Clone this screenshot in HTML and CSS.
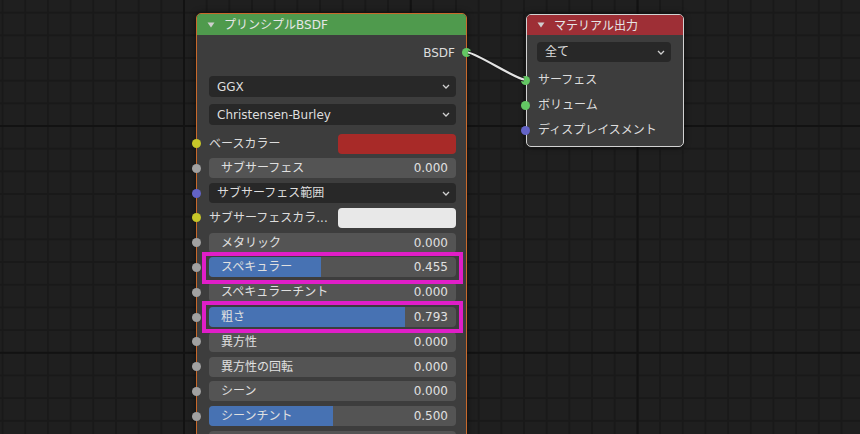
FILE: index.html
```html
<!DOCTYPE html>
<html lang="ja">
<head>
<meta charset="utf-8">
<title>Node Editor</title>
<link rel="stylesheet" href="styles.css">
</head>
<body>
<div class="canvas">
  <svg class="links" width="860" height="434" viewBox="0 0 860 434">
    <path d="M468 52.5 C478 54 514 78 524 79.5" class="link-edge"/>
    <path d="M468 52.5 C478 54 514 78 524 79.5" class="link-core"/>
  </svg>

  <div class="node principled">
    <div class="node-header hdr-green">
      <svg class="tri" width="8" height="6" viewBox="0 0 8 6"><path d="M0.5 0.5 L7.5 0.5 L4 5.5 Z"/></svg>
      <span>プリンシプルBSDF</span>
    </div>
    <div class="node-body">
      <div class="out-row">
        <span>BSDF</span>
        <span class="socket sock-green sock-right"></span>
      </div>
      <div class="select sel-top">
        <span>GGX</span>
        <svg class="chev" width="8" height="5" viewBox="0 0 8 5"><path d="M1 1 L4 4 L7 1"/></svg>
      </div>
      <div class="select sel-second">
        <span>Christensen-Burley</span>
        <svg class="chev" width="8" height="5" viewBox="0 0 8 5"><path d="M1 1 L4 4 L7 1"/></svg>
      </div>
      <div class="inputs">
        <div class="row">
          <span class="socket sock-yellow sock-left"></span>
          <span class="plain-label">ベースカラー</span>
          <span class="swatch swatch-red"></span>
        </div>
        <div class="row">
          <span class="socket sock-grey sock-left"></span>
          <div class="field"><span class="lbl">サブサーフェス</span><span class="val">0.000</span></div>
        </div>
        <div class="row">
          <span class="socket sock-purple sock-left"></span>
          <div class="select select-row">
            <span>サブサーフェス範囲</span>
            <svg class="chev" width="8" height="5" viewBox="0 0 8 5"><path d="M1 1 L4 4 L7 1"/></svg>
          </div>
        </div>
        <div class="row">
          <span class="socket sock-yellow sock-left"></span>
          <span class="plain-label">サブサーフェスカラ...</span>
          <span class="swatch swatch-white"></span>
        </div>
        <div class="row">
          <span class="socket sock-grey sock-left"></span>
          <div class="field"><span class="lbl">メタリック</span><span class="val">0.000</span></div>
        </div>
        <div class="row">
          <span class="socket sock-grey sock-left"></span>
          <div class="field"><span class="fill" style="width:45.5%"></span><span class="lbl">スペキュラー</span><span class="val">0.455</span></div>
        </div>
        <div class="row">
          <span class="socket sock-grey sock-left"></span>
          <div class="field"><span class="lbl">スペキュラーチント</span><span class="val">0.000</span></div>
        </div>
        <div class="row">
          <span class="socket sock-grey sock-left"></span>
          <div class="field"><span class="fill" style="width:79.3%"></span><span class="lbl">粗さ</span><span class="val">0.793</span></div>
        </div>
        <div class="row">
          <span class="socket sock-grey sock-left"></span>
          <div class="field"><span class="lbl">異方性</span><span class="val">0.000</span></div>
        </div>
        <div class="row">
          <span class="socket sock-grey sock-left"></span>
          <div class="field"><span class="lbl">異方性の回転</span><span class="val">0.000</span></div>
        </div>
        <div class="row">
          <span class="socket sock-grey sock-left"></span>
          <div class="field"><span class="lbl">シーン</span><span class="val">0.000</span></div>
        </div>
        <div class="row">
          <span class="socket sock-grey sock-left"></span>
          <div class="field"><span class="fill" style="width:50%"></span><span class="lbl">シーンチント</span><span class="val">0.500</span></div>
        </div>
        <div class="row">
          <span class="socket sock-grey sock-left"></span>
          <div class="field"></div>
        </div>
      </div>
    </div>
  </div>

  <div class="node output">
    <div class="node-header hdr-red">
      <svg class="tri" width="8" height="6" viewBox="0 0 8 6"><path d="M0.5 0.5 L7.5 0.5 L4 5.5 Z"/></svg>
      <span>マテリアル出力</span>
    </div>
    <div class="node-body out-body">
      <div class="select">
        <span>全て</span>
        <svg class="chev" width="8" height="5" viewBox="0 0 8 5"><path d="M1 1 L4 4 L7 1"/></svg>
      </div>
      <div class="out-inputs">
        <div class="row in-row"><span class="socket sock-green sock-left-out"></span><span class="plain-label">サーフェス</span></div>
        <div class="row in-row"><span class="socket sock-green sock-left-out"></span><span class="plain-label">ボリューム</span></div>
        <div class="row in-row"><span class="socket sock-purple sock-left-out"></span><span class="plain-label">ディスプレイスメント</span></div>
      </div>
    </div>
  </div>

  <div class="highlight hl-spec"></div>
  <div class="highlight hl-rough"></div>
</div>
</body>
</html>
```

FILE: styles.css
```css
html, body {
  margin: 0;
  padding: 0;
  background: #1f1f1f;
}

.canvas {
  position: relative;
  width: 860px;
  height: 434px;
  overflow: hidden;
  background-color: #1f1f1f;
  background-image:
    linear-gradient(to right, #121212 0 2px, transparent 2px),
    linear-gradient(to bottom, #121212 0 2px, transparent 2px),
    linear-gradient(to right, #191919 0 2px, transparent 2px),
    linear-gradient(to bottom, #191919 0 2px, transparent 2px);
  background-size: 226.8px 226.8px, 226.8px 226.8px, 22.68px 22.68px, 22.68px 22.68px;
  background-position: 183px 125px, 183px 125px, 1.6px 11.7px, 1.6px 11.7px;
  font-family: "DejaVu Sans", "Noto Sans CJK JP", sans-serif;
  font-size: 12px;
  color: #dddddd;
}

.links {
  position: absolute;
  left: 0;
  top: 0;
  z-index: 3;
  pointer-events: none;
}
.link-edge {
  fill: none;
  stroke: #1a1a1a;
  stroke-width: 4;
}
.link-core {
  fill: none;
  stroke: #e4e4e4;
  stroke-width: 2.2;
}

.node {
  position: absolute;
  background: #3d3d3d;
  border-radius: 5px;
  box-shadow: 0 0 6px rgba(0, 0, 0, 0.55);
  z-index: 2;
}

.principled {
  left: 196px;
  top: 13px;
  width: 269px;
  height: 460px;
  border: 1px solid #c8692b;
}

.output {
  left: 526px;
  top: 14px;
  width: 156px;
  height: 131px;
  border: 1px solid #d2d2d2;
}

.node-header {
  display: flex;
  align-items: center;
  gap: 9px;
  padding-left: 10px;
  border-radius: 4px 4px 0 0;
  color: #e6e6e6;
  line-height: 1;
}
.hdr-green {
  height: 21px;
  background: #4f9a4d;
}
.hdr-red {
  height: 20px;
  background: #9e2f36;
}
.tri {
  flex: none;
}
.tri path {
  fill: #cfcfcf;
}
.node-header span {
  position: relative;
  top: 0.5px;
}

.node-body {
  display: flex;
  flex-direction: column;
  padding: 7px 10px 0 12px;
}

.out-row {
  position: relative;
  height: 21px;
  display: flex;
  align-items: center;
  justify-content: flex-end;
  padding-right: 1px;
  line-height: 1;
}

.select {
  position: relative;
  height: 21px;
  display: flex;
  align-items: center;
  justify-content: space-between;
  padding: 0 6px 0 8px;
  background: #282828;
  border-radius: 4px;
  line-height: 1;
  color: #dedede;
}
.sel-top {
  margin-top: 13px;
}
.sel-second {
  margin-top: 7px;
}
.select-row {
  flex: 1;
  height: 20px;
}
.chev {
  flex: none;
}
.chev path {
  fill: none;
  stroke: #d0d0d0;
  stroke-width: 1.3;
}

.inputs {
  display: flex;
  flex-direction: column;
  gap: 4.8px;
  margin-top: 8.5px;
}

.row {
  position: relative;
  height: 20px;
  display: flex;
  align-items: center;
  line-height: 1;
}

.plain-label {
  flex: 1;
  white-space: nowrap;
  color: #dddddd;
}

.swatch {
  flex: none;
  width: 118px;
  height: 20px;
  border-radius: 4px;
}
.swatch-red {
  background: #a82a28;
}
.swatch-white {
  background: #e8e8e8;
}

.field {
  position: relative;
  flex: 1;
  height: 20px;
  display: flex;
  align-items: center;
  justify-content: space-between;
  padding: 0 8px 0 12px;
  background: #545454;
  border-radius: 4px;
  overflow: hidden;
}
.fill {
  position: absolute;
  left: 0;
  top: 0;
  bottom: 0;
  background: #4772b3;
}
.lbl, .val {
  position: relative;
  color: #e0e0e0;
}

.socket {
  position: absolute;
  width: 9px;
  height: 9px;
  border-radius: 50%;
  top: 50%;
  margin-top: -4.5px;
}
.sock-left {
  left: -17px;
}
.sock-right {
  right: -15px;
}
.sock-left-out {
  left: -16px;
}
.sock-green {
  background: #63c763;
}
.sock-yellow {
  background: #c7c729;
}
.sock-grey {
  background: #a1a1a1;
}
.sock-purple {
  background: #6363c7;
}

.out-body {
  padding: 7px 12px 0 10px;
}
.out-body .select {
  height: 20px;
  padding-left: 8px;
}
.out-inputs {
  display: flex;
  flex-direction: column;
  gap: 5px;
  margin-top: 8px;
}
.in-row .plain-label {
  padding-left: 1px;
}

.highlight {
  position: absolute;
  left: 202px;
  width: 253px;
  height: 24px;
  border: 4px solid #e01ec8;
  z-index: 4;
}
.hl-spec {
  top: 252px;
}
.hl-rough {
  top: 301px;
}
```
